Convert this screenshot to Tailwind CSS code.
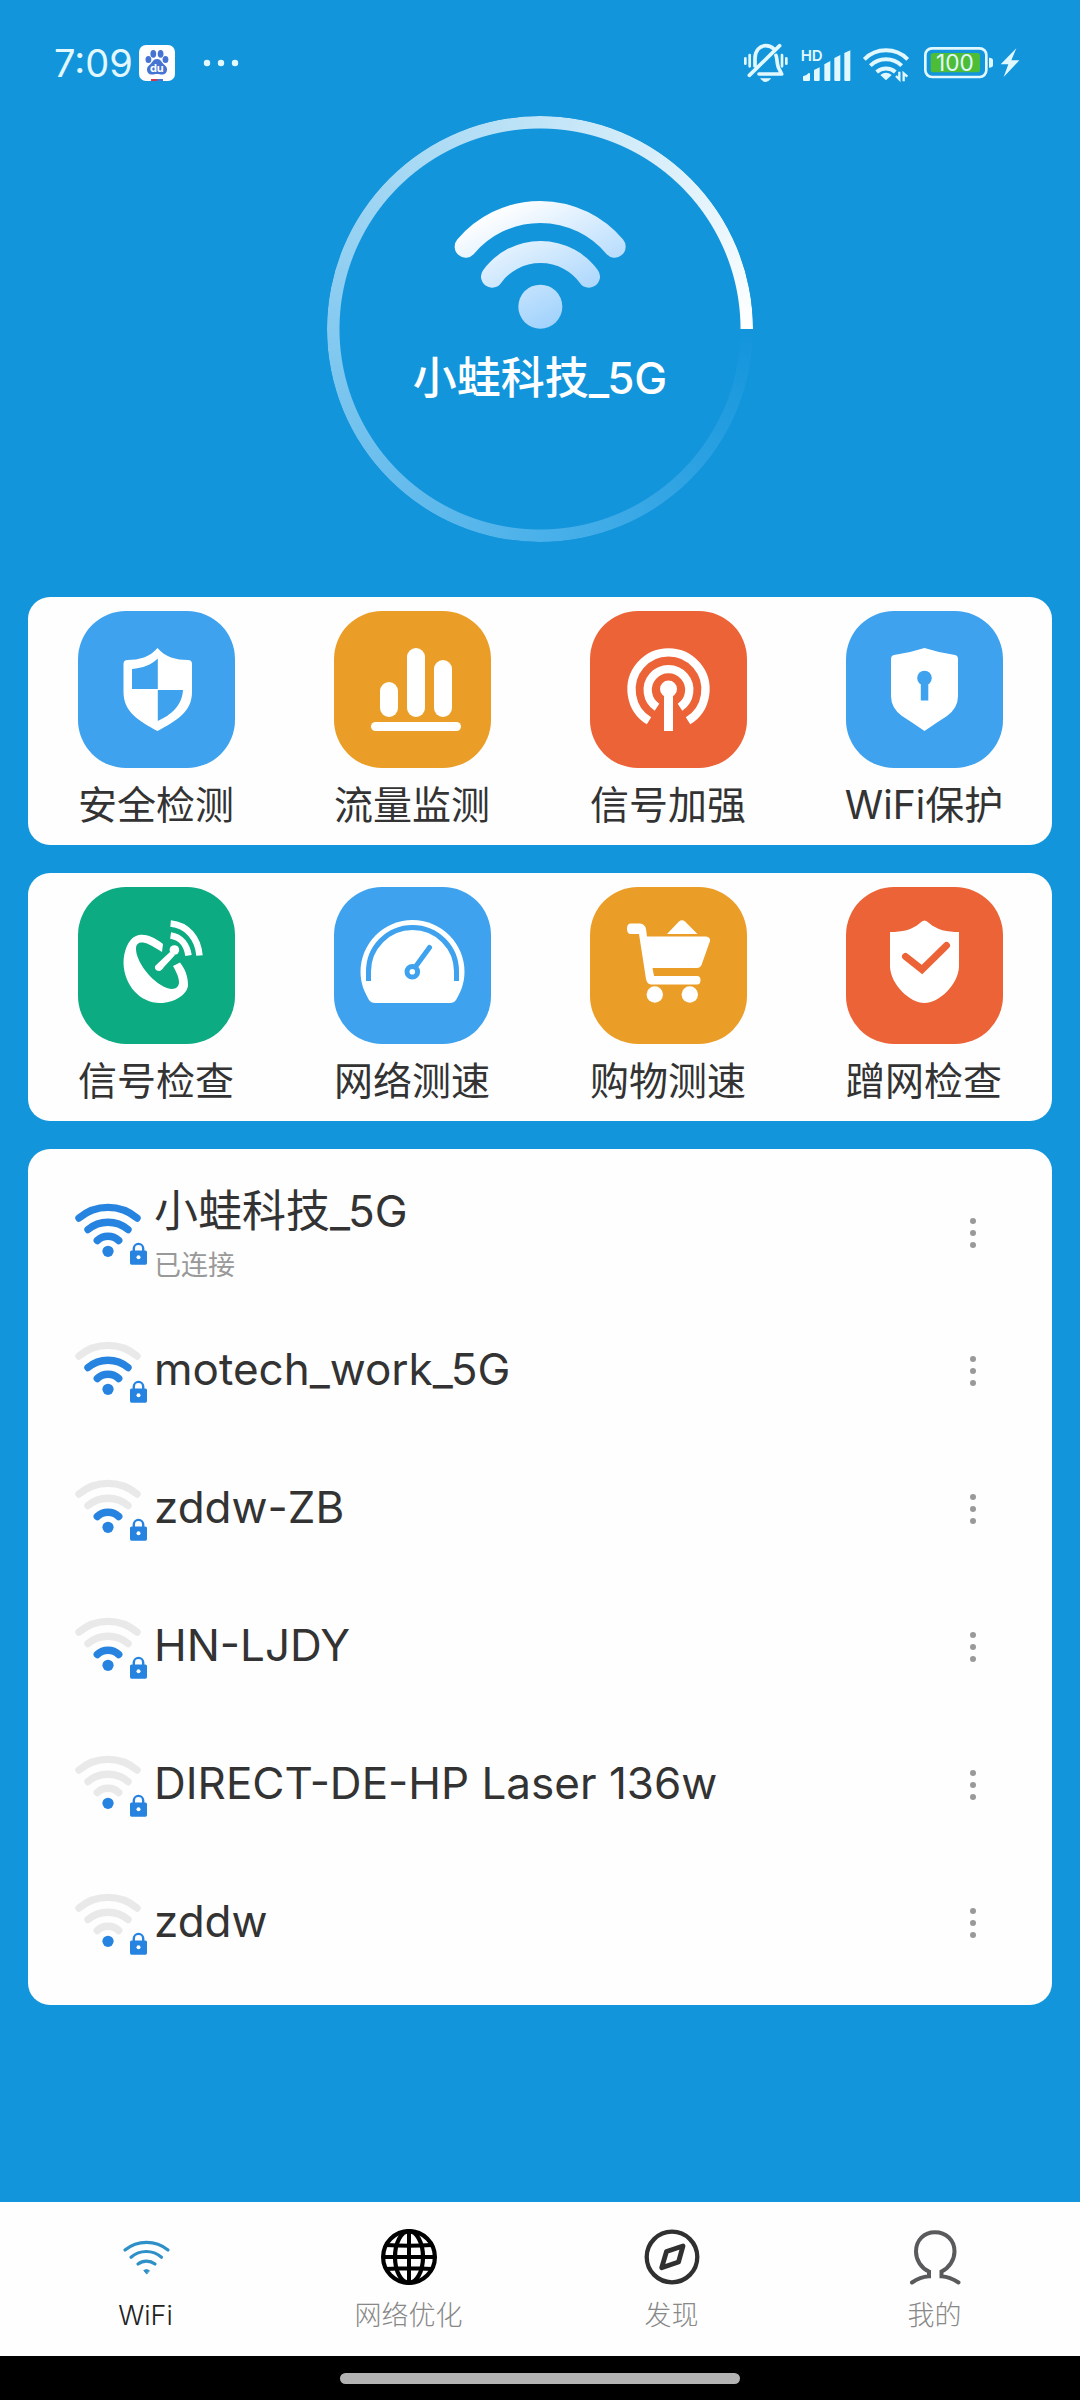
<!DOCTYPE html>
<html lang="zh-CN">
<head>
<meta charset="utf-8">
<meta name="viewport" content="width=device-width, initial-scale=1">
<title>WiFi</title>
<script src="https://cdn.jsdelivr.net/npm/@tailwindcss/browser@4"></script>
</head>
<body class="flex min-h-screen flex-col bg-[#1395dc] font-['Inter','Noto_Sans_CJK_SC',sans-serif] text-[#333]">

<!-- Shared symbols for the network list -->
<svg class="hidden" aria-hidden="true">
  <symbol id="arc-outer" viewBox="0 0 78 70"><path d="M9 20A45 45 0 0 1 67 20" fill="none" stroke="currentColor" stroke-width="7.4" stroke-linecap="round"/></symbol>
  <symbol id="arc-middle" viewBox="0 0 78 70"><path d="M18 31.5A31 31 0 0 1 58 31.5" fill="none" stroke="currentColor" stroke-width="7.4" stroke-linecap="round"/></symbol>
  <symbol id="arc-inner" viewBox="0 0 78 70"><path d="M27.3 42.5A15.5 15.5 0 0 1 48.7 42.5" fill="none" stroke="currentColor" stroke-width="7.4" stroke-linecap="round"/></symbol>
  <symbol id="dot-lock" viewBox="0 0 78 70">
    <circle cx="38" cy="53.3" r="5.6" fill="currentColor"/>
    <path d="M63.8 54V50.6a4.7 4.7 0 0 1 9.4 0V54" fill="none" stroke="currentColor" stroke-width="2.4"/>
    <rect x="60" y="52.5" width="17" height="14.2" rx="1.6" fill="currentColor"/>
    <circle cx="68.5" cy="59.3" r="2" fill="#fff"/>
  </symbol>
  <symbol id="more" viewBox="0 0 30 30"><circle cx="15" cy="3" r="3"/><circle cx="15" cy="15" r="3"/><circle cx="15" cy="27" r="3"/></symbol>
</svg>

<!-- Status bar -->
<header class="flex items-center justify-between pt-9 pr-[60px] pb-[26px] pl-[54px] text-[#e2f8ff]">
  <div class="flex h-[54px] items-center">
    <span class="text-[38px] leading-[54px]">7:09</span>
    <svg class="ml-1.5 size-9" viewBox="0 0 36 36" aria-label="Baidu">
      <rect width="36" height="36" rx="7" fill="#fff"/>
      <g fill="#4674d2">
        <ellipse cx="14.3" cy="8.8" rx="2.9" ry="3.9"/><ellipse cx="21.6" cy="8.8" rx="2.9" ry="3.9"/>
        <ellipse cx="9.4" cy="14.5" rx="2.9" ry="3.6"/><ellipse cx="26.5" cy="14.5" rx="2.9" ry="3.6"/>
        <path d="M18 14c4 0 4.500 3.500 7 5.500c2 1.500 3 3 3 5c0 3-2 5-5 5c-2 0-3-.6-5-.6s-3 .6-5 .6c-3 0-5-2-5-5c0-2 1-3.500 3-5c2.500-2 3-5.500 7-5.500z"/>
      </g>
      <text x="17.8" y="27" text-anchor="middle" font-size="11" font-weight="700" fill="#fff">du</text>
      <rect x="12" y="34" width="6" height="2" fill="#d8344a"/><rect x="18" y="34" width="6" height="2" fill="#4674d2"/>
    </svg>
    <svg class="ml-7 h-[10px] w-9" viewBox="0 0 36 10" fill="currentColor" aria-label="更多通知"><circle cx="4" cy="5" r="3.200"/><circle cx="18" cy="5" r="3.200"/><circle cx="32" cy="5" r="3.200"/></svg>
  </div>
  <div class="flex h-[54px] items-center gap-2.5">
    <svg class="h-10 w-12" viewBox="127 71 144 120" fill="none" stroke="currentColor" stroke-linecap="round" stroke-width="11" aria-label="静音">
      <path d="M166 140V118C166 94 180 79 198 79C208 79 217 83 223 89M240 79L149 168"/>
      <path d="M229 108C234 120 230 138 240 152L246 164H178" stroke-linejoin="round"/>
      <path d="M137 117v16M150 107v34M247 107v34M260 117v16" stroke-width="8"/>
      <path d="M181 177H215Q198 199 181 177Z" fill="currentColor" stroke="none"/>
    </svg>
    <svg class="mt-px h-[36px] w-[52px]" viewBox="298 72 156 108" fill="currentColor" aria-label="HD">
      <text x="300" y="117" font-size="45" font-weight="600">HD</text>
      <path d="M307 174V163Q318 160 325 152L328 155V174Q328 177 325 177H310Q307 177 307 174ZM340 144L357 136V174Q357 177 354 177H343Q340 177 340 174ZM371 127L389 117V174Q389 177 386 177H374Q371 177 371 174ZM401 108L419 99V174Q419 177 416 177H404Q401 177 401 174ZM431 93L449 85V174Q449 177 446 177H434Q431 177 431 174Z"/>
    </svg>
    <svg class="mt-px h-9 w-12" viewBox="486 78 144 108" fill="none" stroke="currentColor" stroke-width="12" aria-label="WiFi">
      <path d="M493 118A92 92 0 0 1 623 118M511 137A67 67 0 0 1 605 137M530 156A42 42 0 0 1 586 156"/>
      <path d="M558 181L541 165Q558 152 575 165Z" fill="currentColor" stroke="none"/>
      <path d="M598 155V178L588 168M611 184V160L622 170" stroke-width="7"/>
    </svg>
    <div class="ml-1 flex items-center gap-1.5">
      <svg class="h-8 w-[70px]" viewBox="672 82 210 96" aria-label="100%">
        <rect x="676" y="86" width="183" height="86" rx="20" fill="none" stroke="currentColor" stroke-width="8"/>
        <rect x="692" y="100" width="148" height="58" rx="8" fill="#4dbd38"/>
        <path d="M867 114q12 0 12 8v14q0 8-12 8z" fill="currentColor"/>
        <text x="765" y="154" text-anchor="middle" font-size="68" fill="currentColor">100</text>
      </svg>
      <svg class="h-[30px] w-5" viewBox="899 85 60 90" fill="currentColor" aria-label="充电中"><path d="M948 86L901 134H924L910 172L957 122H933Z"/></svg>
    </div>
  </div>
</header>

<main class="flex flex-1 flex-col gap-7 px-7">
  <!-- Connected network dial -->
  <section class="relative mx-auto mb-[27px] flex size-[426px] flex-col items-center pt-[82px]">
    <div class="absolute inset-0 rounded-full bg-[conic-gradient(from_90deg,transparent,#4bb1ea_25%,#86caf0_50%,#c0e4f7_75%,#ffffff)] [mask:radial-gradient(closest-side,transparent_200px,black_201px)]"></div>
    <svg class="h-[132px] w-[174px]" viewBox="430 294 522 396" fill="none" stroke="url(#dial)" stroke-width="66" stroke-linecap="round" aria-hidden="true">
      <defs><linearGradient id="dial" gradientUnits="userSpaceOnUse" x1="560" y1="330" x2="740" y2="690"><stop offset="0" stop-color="#fff"/><stop offset="1" stop-color="#9dd0fc"/></linearGradient></defs>
      <path d="M468 440A292 292 0 0 1 915 440M547 530A180 180 0 0 1 838 530"/>
      <circle cx="692" cy="620" r="66" fill="url(#dial)" stroke="none"/>
    </svg>
    <h1 class="mt-4 text-[44px] leading-[64px] font-medium text-white">小蛙科技_5G</h1>
  </section>

  <!-- Tools -->
  <section class="grid grid-cols-4 rounded-[22px] bg-[#fefefe] pt-3.5 pb-3">
    <a href="#" class="flex flex-col items-center gap-2">
      <svg class="size-[157px] rounded-[48px] bg-[#3fa2ee]" viewBox="0 0 157 157" fill="#fff" aria-hidden="true">
        <path d="M79.500 37C87 46 98 49 110 49q4 0 4 4V81C114 101 98 110 79.500 120C61 110 45.500 101 45.500 81V53q0-4 4-4C61 49 72 46 79.500 37Z"/>
        <path d="M79.800 47.500C73 54 65 57 54 58V78H79.800ZM79.800 79H105C104 95 93 104 79.800 110Z" fill="#3fa2ee"/>
      </svg>
      <span class="text-[39px] leading-[57px]">安全检测</span>
    </a>
    <a href="#" class="flex flex-col items-center gap-2">
      <svg class="size-[157px] rounded-[48px] bg-[#ea9e28]" viewBox="0 0 157 157" fill="#fff" aria-hidden="true">
        <rect x="46" y="71" width="18" height="35" rx="9"/><rect x="73" y="37" width="18" height="69" rx="9"/><rect x="100" y="49" width="18" height="57" rx="9"/><rect x="37" y="111" width="90" height="9" rx="4.500"/>
      </svg>
      <span class="text-[39px] leading-[57px]">流量监测</span>
    </a>
    <a href="#" class="flex flex-col items-center gap-2">
      <svg class="size-[157px] rounded-[48px] bg-[#eb6336]" viewBox="0 0 157 157" fill="none" stroke="#fff" stroke-width="8.300" aria-hidden="true">
        <path d="M59 109.800A37 37 0 1 1 98 109.800M67 96.200A20.800 20.800 0 1 1 90 96.200"/><path d="M78.500 78V120" stroke-width="9"/><circle cx="78.500" cy="78" r="8.500" fill="#fff" stroke="none"/>
      </svg>
      <span class="text-[39px] leading-[57px]">信号加强</span>
    </a>
    <a href="#" class="flex flex-col items-center gap-2">
      <svg class="size-[157px] rounded-[48px] bg-[#3fa2ee]" viewBox="0 0 157 157" fill="#fff" aria-hidden="true">
        <path d="M78.500 37Q94 42 109 44Q112 44.500 112 48V85Q112 97 101 105Q90 112 78.500 120Q67 112 56 105Q45 97 45 85V48Q45 44.500 48 44Q63 42 78.500 37Z"/>
        <g fill="#3fa2ee"><circle cx="78.500" cy="67" r="7.300"/><rect x="74.800" y="67" width="7.500" height="22.500"/></g>
      </svg>
      <span class="text-[39px] leading-[57px]">WiFi保护</span>
    </a>
  </section>

  <section class="grid grid-cols-4 rounded-[22px] bg-[#fefefe] pt-3.5 pb-3">
    <a href="#" class="flex flex-col items-center gap-2">
      <svg class="size-[157px] rounded-[48px] bg-[#0dab82]" viewBox="0 0 157 157" fill="#fff" aria-hidden="true">
        <path d="M85 57C74 48 64 46 58 49C50 52 45.500 65 45.500 76C46 98 62 116 82 116C98 116 110 106 110 98C110 89 107 82 102 75.500L95 79C99 86 101 91 101 96C100 102 95 103 89 101C73 95 58 74 58 62C58 54 65 55 70 57C75 59 79 62 84 65Z"/>
        <path d="M92 65L77 79Q76 84 82 84Q85 82 86 80L97 68Z"/><circle cx="96.400" cy="63" r="4.800"/>
        <path d="M92.600 36.500C109 38 120 51 121.500 68.500M92.600 48.500C103 50 109 58 110.500 68.500" fill="none" stroke="#fff" stroke-width="6.500"/>
      </svg>
      <span class="text-[39px] leading-[57px]">信号检查</span>
    </a>
    <a href="#" class="flex flex-col items-center gap-2">
      <svg class="size-[157px] rounded-[48px] bg-[#3fa2ee]" viewBox="0 0 157 157" fill="#fff" aria-hidden="true">
        <path d="M26.500 85A52 52 0 0 1 130.500 85C130.500 97 126 106 122 113Q120 116 116 116H41Q37 116 35 113C31 106 26.500 97 26.500 85Z"/>
        <g fill="none" stroke="#3fa2ee" stroke-width="5"><path d="M34.500 94V84.500A44 44 0 0 1 122.500 84.500V94"/><circle cx="78.300" cy="84.700" r="5.300"/><path d="M82 79L95.500 60.500" stroke-linecap="round"/></g>
      </svg>
      <span class="text-[39px] leading-[57px]">网络测速</span>
    </a>
    <a href="#" class="flex flex-col items-center gap-2">
      <svg class="size-[157px] rounded-[48px] bg-[#ea9e28]" viewBox="0 0 157 157" fill="#fff" aria-hidden="true">
        <path d="M41 36.500H50Q55 37 56 42L57 49.500H116Q120.500 50 120 54L111.500 78Q110 81 107 81H62.500L64 89H107Q110.500 89 110.500 93Q110.500 97.500 107 97.500H61Q57 97 56 92L49 47H41Q37 47 37 41.500Q37 36.500 41 36.500Z"/>
        <path d="M77 47L89 34.500Q92 32 95 34.500L107.500 47Z"/><circle cx="64.800" cy="107.500" r="8.200"/><circle cx="99.800" cy="107.500" r="8.200"/>
      </svg>
      <span class="text-[39px] leading-[57px]">购物测速</span>
    </a>
    <a href="#" class="flex flex-col items-center gap-2">
      <svg class="size-[157px] rounded-[48px] bg-[#eb6336]" viewBox="0 0 157 157" fill="#fff" aria-hidden="true">
        <path d="M74 36Q78.500 31 83 36C91 43 101 45 113 45V80C112 98 93 116 78.500 116C64 116 45 98 44 80V45C56 45 66 43 74 36Z"/>
        <path d="M59.500 69.500L76 82.500L100.500 58.500" fill="none" stroke="#eb6336" stroke-width="7" stroke-linecap="round"/>
      </svg>
      <span class="text-[39px] leading-[57px]">蹭网检查</span>
    </a>
  </section>

  <!-- Networks in range -->
  <ul class="mb-7 rounded-[22px] bg-[#fefefe] pt-[15px] pb-[13px]">
    <li class="flex h-[138px] items-center pr-[47px] pl-[42px]">
      <svg class="h-[70px] w-[78px] text-[#2683e0]" aria-hidden="true"><use href="#arc-outer"/><use href="#arc-middle"/><use href="#arc-inner"/><use href="#dot-lock"/></svg>
      <div class="ml-1.5 flex-1 pt-0.5">
        <p class="text-[44px] leading-[64px]">小蛙科技_5G</p>
        <p class="text-[27px] leading-[46px] text-[#999]">已连接</p>
      </div>
      <button class="flex size-16 items-center justify-center text-[#999]" aria-label="更多"><svg class="size-[30px]" fill="currentColor"><use href="#more"/></svg></button>
    </li>
    <li class="flex h-[138px] items-center pr-[47px] pl-[42px]">
      <svg class="h-[70px] w-[78px] text-[#2683e0]" aria-hidden="true"><use class="text-[#e9e9e9]" href="#arc-outer"/><use href="#arc-middle"/><use href="#arc-inner"/><use href="#dot-lock"/></svg>
      <p class="ml-1.5 flex-1 pb-1 text-[44px] leading-[64px]">motech_work_5G</p>
      <button class="flex size-16 items-center justify-center text-[#999]" aria-label="更多"><svg class="size-[30px]" fill="currentColor"><use href="#more"/></svg></button>
    </li>
    <li class="flex h-[138px] items-center pr-[47px] pl-[42px]">
      <svg class="h-[70px] w-[78px] text-[#2683e0]" aria-hidden="true"><use class="text-[#e9e9e9]" href="#arc-outer"/><use class="text-[#e9e9e9]" href="#arc-middle"/><use href="#arc-inner"/><use href="#dot-lock"/></svg>
      <p class="ml-1.5 flex-1 pb-1 text-[44px] leading-[64px]">zddw-ZB</p>
      <button class="flex size-16 items-center justify-center text-[#999]" aria-label="更多"><svg class="size-[30px]" fill="currentColor"><use href="#more"/></svg></button>
    </li>
    <li class="flex h-[138px] items-center pr-[47px] pl-[42px]">
      <svg class="h-[70px] w-[78px] text-[#2683e0]" aria-hidden="true"><use class="text-[#e9e9e9]" href="#arc-outer"/><use class="text-[#e9e9e9]" href="#arc-middle"/><use href="#arc-inner"/><use href="#dot-lock"/></svg>
      <p class="ml-1.5 flex-1 pb-1 text-[44px] leading-[64px]">HN-LJDY</p>
      <button class="flex size-16 items-center justify-center text-[#999]" aria-label="更多"><svg class="size-[30px]" fill="currentColor"><use href="#more"/></svg></button>
    </li>
    <li class="flex h-[138px] items-center pr-[47px] pl-[42px]">
      <svg class="h-[70px] w-[78px] text-[#2683e0]" aria-hidden="true"><use class="text-[#e9e9e9]" href="#arc-outer"/><use class="text-[#e9e9e9]" href="#arc-middle"/><use class="text-[#e9e9e9]" href="#arc-inner"/><use href="#dot-lock"/></svg>
      <p class="ml-1.5 flex-1 pb-1 text-[44px] leading-[64px]">DIRECT-DE-HP Laser 136w</p>
      <button class="flex size-16 items-center justify-center text-[#999]" aria-label="更多"><svg class="size-[30px]" fill="currentColor"><use href="#more"/></svg></button>
    </li>
    <li class="flex h-[138px] items-center pr-[47px] pl-[42px]">
      <svg class="h-[70px] w-[78px] text-[#2683e0]" aria-hidden="true"><use class="text-[#e9e9e9]" href="#arc-outer"/><use class="text-[#e9e9e9]" href="#arc-middle"/><use class="text-[#e9e9e9]" href="#arc-inner"/><use href="#dot-lock"/></svg>
      <p class="ml-1.5 flex-1 pb-1 text-[44px] leading-[64px]">zddw</p>
      <button class="flex size-16 items-center justify-center text-[#999]" aria-label="更多"><svg class="size-[30px]" fill="currentColor"><use href="#more"/></svg></button>
    </li>
  </ul>
</main>

<!-- Tab bar -->
<nav class="grid grid-cols-4 bg-[#fefefe] px-3.5 pt-[27px] pb-5 text-[27px] leading-[40px] font-light text-[#888]">
  <a href="#" class="flex flex-col items-center gap-[11px] text-[#222]" aria-current="page">
    <svg class="size-14" viewBox="0 0 56 56" fill="none" stroke="#2f90c8" stroke-width="3.200" stroke-linecap="round" aria-hidden="true">
      <path d="M7 21A34 34 0 0 1 50 21M13 28.300A23 23 0 0 1 43.500 28.300M20 35A14 14 0 0 1 37 35"/><path d="M28.500 44.800L25.800 41.500Q28.500 39.500 31.200 41.500Z" fill="#2f90c8" stroke-width="1"/>
    </svg>
    <span>WiFi</span>
  </a>
  <a href="#" class="flex flex-col items-center gap-[11px]">
    <svg class="size-14" viewBox="0 0 56 56" fill="none" stroke="#000" stroke-width="4.200" aria-hidden="true">
      <circle cx="28" cy="28" r="25.900"/><ellipse cx="28" cy="28" rx="14" ry="25.900"/><path d="M28 2V54M2 28H54M5 16Q28 17.500 51 16M5 40Q28 38.500 51 40" stroke-width="4"/>
    </svg>
    <span>网络优化</span>
  </a>
  <a href="#" class="flex flex-col items-center gap-[11px]">
    <svg class="size-14" viewBox="0 0 56 56" fill="none" stroke="#303030" stroke-width="4.300" stroke-linejoin="round" aria-hidden="true">
      <circle cx="28" cy="28" r="25.300"/><path d="M17.700 38.800L22.500 22.500L39 17L34.500 33Z" stroke-width="4.800"/>
    </svg>
    <span>发现</span>
  </a>
  <a href="#" class="flex flex-col items-center gap-[11px]">
    <svg class="size-14" viewBox="0 0 56 56" fill="none" stroke="#5a5a5c" stroke-width="4" stroke-linecap="round" aria-hidden="true">
      <path d="M5 53.500Q13 48 22 47.300V42.500C14 39 9 31 9 22.500C9 11 17 3.200 28 3.200C39 3.200 47.500 11 47.500 22.500C47.500 31 42 39 34.500 42.500V47.300Q43 48 51.500 53.500"/>
    </svg>
    <span>我的</span>
  </a>
</nav>
<div class="flex h-11 justify-center bg-black pt-[17px]"><div class="h-[11px] w-[400px] rounded-full bg-[#b3b3b3]"></div></div>

</body>
</html>
